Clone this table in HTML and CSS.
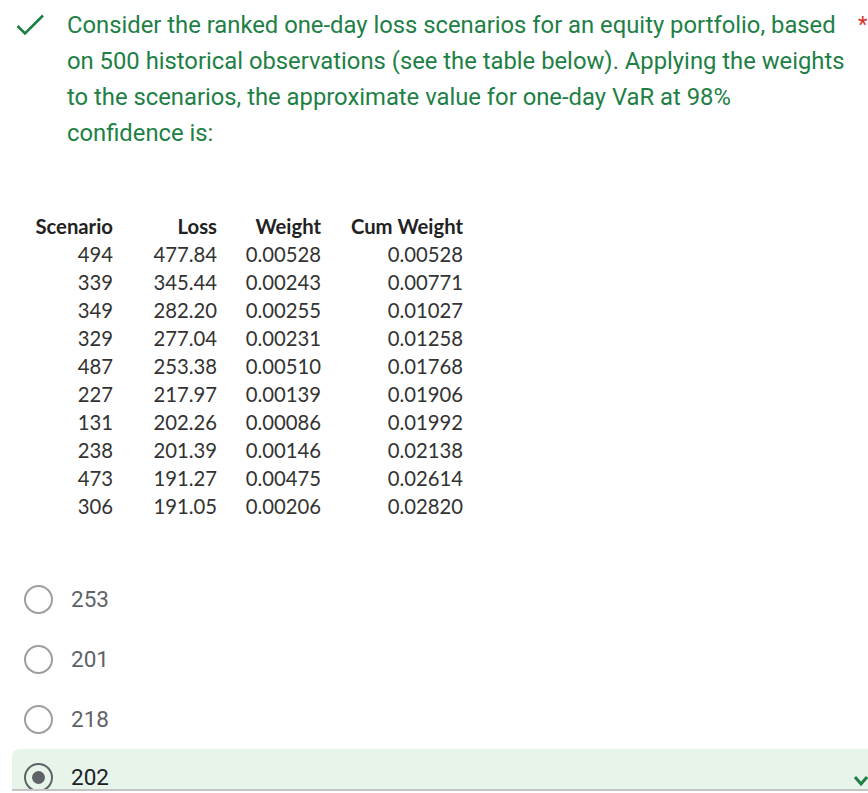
FILE: index.html
```html
<!DOCTYPE html>
<html>
<head>
<meta charset="utf-8">
<link rel="stylesheet" href="styles.css">
</head>
<body>
<div class="page">
  <div class="question">
    <svg class="check" width="30" height="24" viewBox="0 0 30 24"><polyline points="2.5,13 10,20.5 28,2.5" fill="none" stroke="#1e8045" stroke-width="2.6"/></svg>
    <div class="qtext">Consider the ranked one-day loss scenarios for an equity portfolio, based on 500 historical observations (see the table below). Applying the weights to the scenarios, the approximate value for one-day VaR at 98% confidence is:</div>
    <span class="req">*</span>
  </div>

  <div class="table">
    <div class="th">Scenario</div><div class="th">Loss</div><div class="th">Weight</div><div class="th">Cum Weight</div>
    <div>494</div><div>477.84</div><div>0.00528</div><div>0.00528</div>
    <div>339</div><div>345.44</div><div>0.00243</div><div>0.00771</div>
    <div>349</div><div>282.20</div><div>0.00255</div><div>0.01027</div>
    <div>329</div><div>277.04</div><div>0.00231</div><div>0.01258</div>
    <div>487</div><div>253.38</div><div>0.00510</div><div>0.01768</div>
    <div>227</div><div>217.97</div><div>0.00139</div><div>0.01906</div>
    <div>131</div><div>202.26</div><div>0.00086</div><div>0.01992</div>
    <div>238</div><div>201.39</div><div>0.00146</div><div>0.02138</div>
    <div>473</div><div>191.27</div><div>0.00475</div><div>0.02614</div>
    <div>306</div><div>191.05</div><div>0.00206</div><div>0.02820</div>
  </div>

  <div class="options">
    <div class="option"><span class="radio"></span><span class="label">253</span></div>
    <div class="option"><span class="radio"></span><span class="label">201</span></div>
    <div class="option"><span class="radio"></span><span class="label">218</span></div>
    <div class="option selected"><span class="radio"><span class="dot"></span></span><span class="label">202</span>
      <svg class="chev" width="20" height="14" viewBox="0 0 20 14"><polyline points="2,3 8,10 14,3" fill="none" stroke="#1e8045" stroke-width="3"/></svg>
    </div>
  </div>
</div>
</body>
</html>
```

FILE: styles.css
```css
html, body {
  margin: 0;
  padding: 0;
  background: #ffffff;
  overflow: hidden;
}
.page {
  width: 868px;
  height: 793px;
  overflow: hidden;
  font-family: Roboto, "Liberation Sans", sans-serif;
}
.question {
  display: flex;
  align-items: flex-start;
  padding-top: 7px;
}
.check {
  margin-left: 15px;
  margin-top: 6px;
  flex: none;
}
.qtext {
  margin-left: 22px;
  width: 780px;
  flex: none;
  font-size: 23.8px;
  line-height: 36px;
  color: #1e8045;
}
.req {
  margin-left: 11px;
  font-size: 22px;
  line-height: 36px;
  color: #d93025;
}
.table {
  display: grid;
  grid-template-columns: 80px 104px 104px 142px;
  grid-auto-rows: 28px;
  margin-left: 33px;
  margin-top: 61px;
  font-family: Lato, "Open Sans", sans-serif;
  font-size: 20.3px;
  color: #333333;
  text-align: right;
  align-items: center;
}
.table .th {
  font-weight: bold;
  color: #222222;
}
.options {
  margin-left: 12px;
  margin-top: 49px;
}
.option {
  display: flex;
  align-items: center;
  height: 60px;
  padding-left: 12px;
}
.radio {
  width: 25px;
  height: 25px;
  border: 2.5px solid #9e9e9e;
  border-radius: 50%;
  flex: none;
  display: flex;
  align-items: center;
  justify-content: center;
}
.label {
  margin-left: 18px;
  font-size: 22.5px;
  color: #5f6368;
}
.option.selected {
  background: #e6f4ea;
  border-radius: 8px 0 0 0;
  align-items: flex-start;
  padding-top: 14px;
  box-sizing: border-box;
  overflow: hidden;
  width: 880px;
  border-bottom: 2px solid #c4c4c4;
  height: 42px;
}
.option.selected .radio {
  border-color: #5f6368;
}
.option.selected .label {
  color: #202124;
  margin-top: 1px;
}
.dot {
  width: 13px;
  height: 13px;
  border-radius: 50%;
  background: #5f6368;
}
.chev {
  margin-left: auto;
  margin-right: 19px;
  margin-top: 11px;
}
```
